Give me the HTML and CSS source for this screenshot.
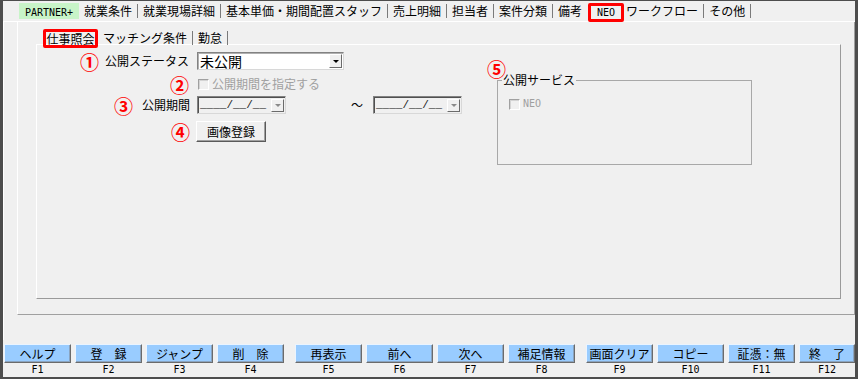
FILE: index.html
```html
<!DOCTYPE html>
<html lang="ja">
<head>
<meta charset="utf-8">
<title>NEO</title>
<link rel="stylesheet" href="styles.css">
</head>
<body>
<div class="window">
  <div class="tabbar">
    <span class="partner"><span class="lat">PARTNER+</span></span>
    <span class="tab sep">就業条件</span>
    <span class="tab sep">就業現場詳細</span>
    <span class="tab sep">基本単価・期間配置スタッフ</span>
    <span class="tab sep">売上明細</span>
    <span class="tab sep">担当者</span>
    <span class="tab sep">案件分類</span>
    <span class="tab">備考</span>
    <span class="tab-mark"><span class="lat">NEO</span></span>
    <span class="tab sep after-mark">ワークフロー</span>
    <span class="tab sep">その他</span>
  </div>
  <div class="frame-a">
    <div class="frame-b">
      <div class="subtabs">
        <span class="subtab-mark">仕事照会</span>
        <span class="subtab sep">マッチング条件</span>
        <span class="subtab sep">勤怠</span>
      </div>
      <div class="panel">
        <div class="fields">
          <div class="row r1">
            <div class="lead"><span class="num gap6">①</span><span class="label">公開ステータス</span></div>
            <div class="select"><span class="select-text">未公開</span><span class="drop"><span class="tri"></span></span></div>
          </div>
          <div class="row r2">
            <div class="lead"><span class="num">②</span></div>
            <span class="chk"></span><span class="dis">公開期間を指定する</span>
          </div>
          <div class="row r3">
            <div class="lead"><span class="num gap9">③</span><span class="label">公開期間</span></div>
            <div class="date"><span class="date-text">____/__/__</span><span class="drop"><span class="tri gray"></span></span></div>
            <span class="tilde">～</span>
            <div class="date date2"><span class="date-text">____/__/__</span><span class="drop"><span class="tri gray"></span></span></div>
          </div>
          <div class="row r4">
            <div class="lead"><span class="num">④</span></div>
            <button class="btn" type="button">画像登録</button>
          </div>
        </div>
        <div class="service">
          <span class="num">⑤</span>
          <fieldset class="group">
            <legend>公開サービス</legend>
            <div class="svc-row"><span class="chk"></span><span class="dis lat">NEO</span></div>
          </fieldset>
        </div>
      </div>
    </div>
  </div>
  <div class="fkeys">
    <div class="fk"><span class="fbtn">ヘルプ</span><span class="fkey">F1</span></div>
    <div class="fk"><span class="fbtn">登　録</span><span class="fkey">F2</span></div>
    <div class="fk"><span class="fbtn">ジャンプ</span><span class="fkey">F3</span></div>
    <div class="fk"><span class="fbtn">削　除</span><span class="fkey">F4</span></div>
    <div class="fk grp"><span class="fbtn">再表示</span><span class="fkey">F5</span></div>
    <div class="fk"><span class="fbtn">前へ</span><span class="fkey">F6</span></div>
    <div class="fk"><span class="fbtn">次へ</span><span class="fkey">F7</span></div>
    <div class="fk"><span class="fbtn">補足情報</span><span class="fkey">F8</span></div>
    <div class="fk grp"><span class="fbtn">画面クリア</span><span class="fkey">F9</span></div>
    <div class="fk"><span class="fbtn">コピー</span><span class="fkey">F10</span></div>
    <div class="fk"><span class="fbtn">証憑：無</span><span class="fkey">F11</span></div>
    <div class="fk last"><span class="fbtn">終　了</span><span class="fkey">F12</span></div>
  </div>
</div>
</body>
</html>
```

FILE: styles.css
```css
* { box-sizing: border-box; }
html, body { margin: 0; padding: 0; }
body {
  width: 858px;
  height: 379px;
  overflow: hidden;
  background: #f0f0f0;
  font-family: "Noto Sans CJK JP", sans-serif;
  font-size: 12px;
  color: #000;
}
.window {
  width: 858px;
  height: 379px;
  border-style: solid;
  border-color: #4d4d4d;
  border-width: 1px 3px 2px 3px;
  display: flex;
  flex-direction: column;
  background: #f0f0f0;
}
.lat { font-family: "DejaVu Sans Mono", monospace; font-size: 10px; }

/* top tabs */
.tabbar {
  height: 20px;
  flex: none;
  display: flex;
  align-items: center;
  padding-left: 16px;
}
.tab {
  height: 14px;
  line-height: 14px;
  padding: 0 5px;
  white-space: nowrap;
}
.sep { border-right: 1px solid #7a7a7a; }
.partner {
  width: 60px;
  height: 16px;
  line-height: 16px;
  background: #c8f4c8;
  text-align: center;
}
.tab-mark {
  align-self: flex-start;
  margin-top: 2px;
  margin-left: 1px;
  width: 36px;
  height: 19px;
  border: 3px solid #f00;
  border-radius: 2px;
  display: flex;
  align-items: center;
  justify-content: center;
  position: relative;
  z-index: 1;
}
.after-mark { padding-left: 2px; }

/* frames */
.frame-a {
  flex: none;
  height: 319px;
  border-top: 1px solid #fff;
  border-left: 1px solid #fff;
  padding-left: 13px;
}
.frame-b {
  width: 838px;
  height: 293px;
  border-left: 1px solid #fff;
  border-right: 1px solid #a0a0a0;
  border-bottom: 1px solid #a0a0a0;
  padding-top: 7px;
}
.subtabs {
  height: 15px;
  display: flex;
  align-items: flex-start;
  padding-left: 25px;
}
.subtab-mark {
  width: 55px;
  height: 19px;
  border: 3px solid #f00;
  border-radius: 2px;
  display: flex;
  align-items: center;
  justify-content: center;
  position: relative;
  z-index: 1;
  white-space: nowrap;
}
.subtab {
  margin-top: 2px;
  height: 14px;
  line-height: 14px;
  padding: 0 5px;
  white-space: nowrap;
}
.panel {
  margin-left: 18px;
  width: 805px;
  height: 255px;
  border-top: 1px solid #fff;
  border-left: 1px solid #fff;
  border-right: 1px solid #9a9a9a;
  border-bottom: 1px solid #9a9a9a;
  display: flex;
}

/* fields */
.fields { width: 450px; display: flex; flex-direction: column; }
.row { display: flex; align-items: center; }
.lead {
  width: 160px;
  display: flex;
  justify-content: flex-end;
  align-items: center;
  padding-right: 8px;
}
.r1 { height: 18px; margin-top: 7px; }
.r2 { height: 16px; margin-top: 6px; }
.r3 { height: 18px; margin-top: 4px; }
.r3 .lead { padding-right: 7px; }
.r4 { height: 21px; margin-top: 7px; }
.r4 .lead { padding-right: 7px; }
.num {
  color: #f00;
  font-size: 19px;
  line-height: 17px;
  font-weight: 700;
}
.gap6 { margin-right: 6px; }
.gap9 { margin-right: 9px; }
.label { line-height: 14px; white-space: nowrap; }

.select {
  width: 147px;
  height: 18px;
  background: #fff;
  border: 1px solid;
  border-color: #828282 #d8d8d8 #d8d8d8 #828282;
  box-shadow: inset 1px 1px 0 #b0b0b0;
  display: flex;
  align-items: center;
  padding-left: 2px;
}
.select-text { font-size: 14px; line-height: 16px; }
.drop {
  margin-left: auto;
  margin-right: 1px;
  width: 13px;
  height: 14px;
  background: #f0f0f0;
  border: 1px solid;
  border-color: #fff #6b6b6b #6b6b6b #fff;
  display: flex;
  align-items: center;
  justify-content: center;
}
.tri {
  width: 0;
  height: 0;
  border-left: 3px solid transparent;
  border-right: 3px solid transparent;
  border-top: 3px solid #000;
}
.tri.gray { border-top-color: #8a8a8a; }

.chk {
  width: 11px;
  height: 11px;
  border: 1px solid;
  border-color: #a0a0a0 #fff #fff #a0a0a0;
  box-shadow: inset 1px 1px 0 #d4d4d4;
  margin-left: 1px;
  margin-right: 3px;
  flex: none;
}
.dis { color: #a0a0a0; line-height: 14px; white-space: nowrap; }

.date {
  width: 89px;
  height: 18px;
  background: #f0f0f0;
  border: 1px solid;
  border-color: #828282 #d8d8d8 #d8d8d8 #828282;
  box-shadow: inset 1px 1px 0 #505050;
  display: flex;
  align-items: center;
  padding-left: 2px;
}
.date-text {
  font-family: "Liberation Mono", monospace;
  font-size: 11px;
  line-height: 14px;
  color: #222;
}
.date .drop { height: 13px; }
.tilde { margin-left: 65px; width: 12px; line-height: 14px; }
.date2 { margin-left: 10px; }

.btn {
  margin-left: -1px;
  width: 70px;
  height: 21px;
  padding: 0;
  font-family: inherit;
  font-size: 12px;
  color: #000;
  background: #f0f0f0;
  border: 1px solid;
  border-color: #fff #5a5a5a #5a5a5a #fff;
  box-shadow: inset -1px -1px 0 #a0a0a0;
}

/* service group */
.service {
  margin-top: 15px;
  display: flex;
  flex-direction: column;
  align-items: flex-start;
}
.group {
  margin: -4px 0 0 10px;
  width: 255px;
  height: 92px;
  padding: 0 0 0 4px;
  border: 1px solid #a8a8a8;
  min-width: 0;
}
.group legend {
  padding: 0 1px;
  line-height: 14px;
  font-size: 12px;
}
.svc-row {
  display: flex;
  align-items: center;
  margin-top: 10px;
  margin-left: 6px;
}

/* function keys */
.fkeys {
  flex: none;
  display: flex;
  gap: 4px;
  padding-left: 1px;
  padding-top: 4px;
}
.fk {
  width: 67px;
  flex: none;
  display: flex;
  flex-direction: column;
  align-items: center;
}
.fk.grp { margin-left: 7px; }
.fk.last { width: 56px; }
.fbtn {
  width: 100%;
  height: 19px;
  background: #99ccff;
  border: 1px solid;
  border-color: #eaf4ff #6b6b6b #6b6b6b #eaf4ff;
  box-shadow: inset -1px -1px 0 #8aa4c0;
  display: flex;
  align-items: center;
  justify-content: center;
  white-space: nowrap;
  line-height: 14px;
}
.fkey {
  height: 14px;
  line-height: 14px;
  font-family: "DejaVu Sans Mono", monospace;
  font-size: 10px;
}
```
